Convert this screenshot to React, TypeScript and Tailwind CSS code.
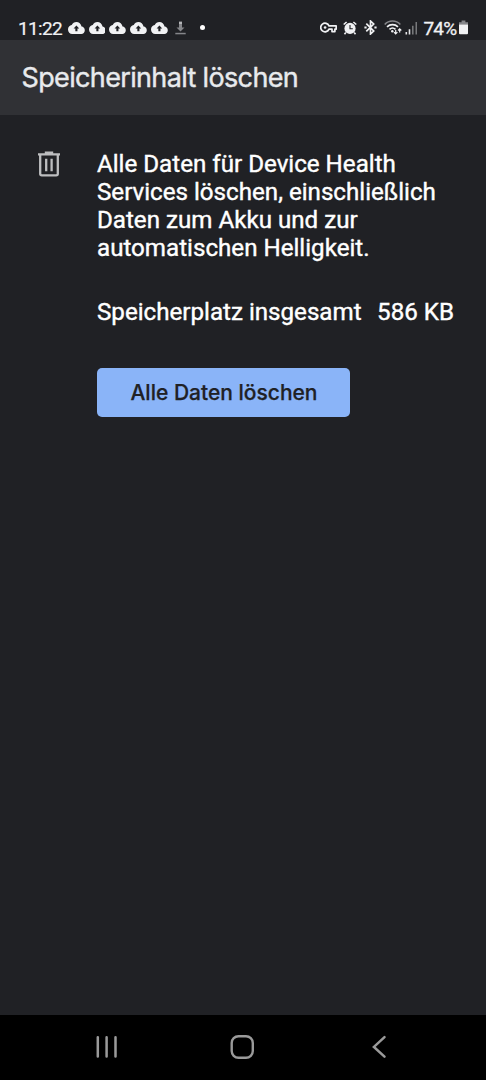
import React from 'react';

const CloudUpload: React.FC = () => (
  <svg className="w-[16.8px] h-[12px]" viewBox="0 4 24 16" preserveAspectRatio="none" fill="currentColor">
    <path fillRule="evenodd" d="M19.35 10.04C18.67 6.59 15.64 4 12 4 9.11 4 6.6 5.64 5.35 8.04 2.34 8.36 0 10.91 0 14c0 3.31 2.69 6 6 6h13c2.76 0 5-2.24 5-5 0-2.64-2.05-4.78-4.65-4.96zM13.5 12.8v3.6h-3v-3.6H8L12 8.6l4 4.2h-2.5z" />
  </svg>
);

const StatusBar: React.FC = () => (
  <div className="flex h-10 items-center pt-[15px] pb-0 pl-[18px] text-[#f1f2f4]">
    <span className="w-[50px] pt-px text-[19px] leading-[25px] tracking-[-0.65px] whitespace-nowrap [-webkit-text-stroke:0.2px]">11:22</span>
    <div className="flex gap-[3.9px]">
      {[0, 1, 2, 3, 4].map((i) => <CloudUpload key={i} />)}
    </div>
    <svg className="ml-[7px] h-[14px] w-[11px]" viewBox="0 0 11 14" fill="#85868a">
      <path d="M4 3.5h3v3h2.5l-4 4-4-4H4z" />
      <path d="M4 .6h3v2.9H4z" fill="#b4b5b8" />
      <path d="M.3 11.8h10.4v1.5H.3z" />
    </svg>
    <span className="ml-[14px] h-[5.4px] w-[5.4px] rounded-full bg-white" />

    {/* Right side: system indicators */}
    <svg className="ml-[115px] h-[11px] w-[17px]" viewBox="0 0 17 11" fill="none" stroke="currentColor" strokeWidth="1.7">
      <path d="M9 3.9A4.3 4.3 0 1 0 9 7.1h3v2.5h2.9V7.1h1.3V3.9z" strokeLinejoin="round" />
      <circle cx="5.1" cy="5.5" r="1.3" fill="currentColor" stroke="none" />
    </svg>
    <svg className="ml-[6px] h-[14px] w-[14px]" viewBox="0 0 14 14" fill="none" stroke="currentColor">
      <circle cx="7" cy="7.4" r="5.6" fill="currentColor" stroke="none" />
      <path d="M.7 3.5 3.6 1M13.3 3.5 10.4 1M2.8 11.5l-1.3 1.7M11.2 11.5l1.3 1.7" strokeWidth="1.6" />
      <path d="M7 4v3.7h2.8" stroke="#202124" strokeWidth="1.1" />
    </svg>
    <svg className="ml-[7px] h-[15px] w-[13px]" viewBox="0 0 13 15" fill="none" stroke="currentColor" strokeWidth="1.7">
      <path d="m2.3 3.6 7.4 7.4-3.2 3V1l3.2 3-7.4 7.4" />
      <path d="M.4 7.5h2.2M10.4 7.5h2.2" strokeWidth="1.9" />
    </svg>
    <svg className="ml-[7px] h-[15px] w-[18px]" viewBox="0 0 18 15" fill="none" stroke="currentColor" strokeWidth="1.6">
      <path d="M.7 4.5C5-.1 12-.1 16.3 4.5" stroke="#85868a" />
      <path d="M3 6.9c3.1-3 7.9-3 11 0M5.5 9.3c1.8-1.6 4.2-1.6 6 0" />
      <circle cx="8.3" cy="11.3" r="1.2" fill="currentColor" stroke="none" />
      <path d="M11.7 10v3.8M10 12.2l1.7 1.7 1.7-1.7M15.7 12.5V8.9M14.1 10.5l1.6-1.6 1.6 1.6" strokeWidth="1.2" />
    </svg>
    <svg className="ml-[3px] h-[14px] w-[13px]" viewBox="0 0 13 14" fill="#77787b">
      <path d="M.5 11h1.6v2.5H.5zM3.7 8.3h1.6v5.2H3.7z" fill="#e3e4e6" />
      <path d="M7 4.7h1.6v8.8H7zM10.5 1H12v12.5h-1.5z" />
    </svg>
    <span className="ml-[5.5px] w-[35.5px] pt-px text-[19px] leading-[25px] tracking-[-0.8px] whitespace-nowrap [-webkit-text-stroke:0.3px]">74%</span>
    <svg className="h-[15px] w-[9px]" viewBox="0 0 9 15" fill="currentColor">
      <path d="M2.6.6h3.8v1.6H9v2.5H0V2.2h2.6z" fill="#85868a" />
      <path d="M0 4.5h9v8.7a1 1 0 0 1-1 1H1a1 1 0 0 1-1-1z" />
    </svg>
  </div>
);

const TrashIcon: React.FC = () => (
  <svg className="h-[26px] w-[22px] shrink-0" viewBox="0 0 22 26" fill="none" stroke="#bdbec0" strokeWidth="2.3">
    <path d="M6.8 1.7h8.4M0 3.4h22" />
    <path d="M2.2 3.5v19.3a1.6 1.6 0 0 0 1.6 1.6h14.4a1.6 1.6 0 0 0 1.6-1.6V3.5M8.2 7.8v12.4M13.6 7.8v12.4" />
  </svg>
);

const NavigationBar: React.FC = () => (
  <nav className="flex h-[65px] items-center bg-black pb-0.5 pl-24 text-[#9a9a9a]">
    <button aria-label="Recents">
      <svg className="h-6 w-[22px]" viewBox="0 0 22 24" fill="none" stroke="currentColor" strokeWidth="2.5" strokeLinecap="round">
        <path d="M1.8 2.2v19.4M10.6 2.2v19.4M19.5 2.2v19.4" />
      </svg>
    </button>
    <button aria-label="Home" className="ml-[112px]">
      <svg className="h-6 w-6" viewBox="0 0 24 24" fill="none" stroke="currentColor" strokeWidth="2.4">
        <rect x="1.7" y="1.2" width="21.1" height="21.6" rx="6.8" />
      </svg>
    </button>
    <button aria-label="Back" className="ml-[117.5px]">
      <svg className="h-6 w-[15px]" viewBox="0 0 15 24" fill="none" stroke="currentColor" strokeWidth="2.5" strokeLinecap="round">
        <path d="M12.5 2.1 1.9 11.9l10.6 9.8" />
      </svg>
    </button>
  </nav>
);

export default function App() {
  return (
    <div className="flex h-[1080px] w-[486px] flex-col overflow-hidden bg-[#202125] font-[Roboto,sans-serif]">
      <StatusBar />
      <header className="flex h-[75px] items-center bg-[#303135] pt-0.5 pl-[21.5px]">
        <h1 className="font-[Inter,sans-serif] text-[27px] tracking-[-0.65px] text-[#e8eaed] whitespace-nowrap [-webkit-text-stroke:0.4px]">Speicherinhalt löschen</h1>
      </header>

      <main className="flex flex-1 items-start pt-9 pl-[38px]">
        <TrashIcon />
        <div className="-mt-px ml-[37px] text-[24.15px] leading-7 text-white [-webkit-text-stroke:0.4px]">
          <p className="whitespace-nowrap">
            Alle Daten für Device Health<br />
            Services löschen, einschließlich<br />
            Daten zum Akku und zur<br />
            automatischen Helligkeit.
          </p>
          <div className="mt-9 flex gap-[15.5px] whitespace-nowrap">
            <span>Speicherplatz insgesamt</span>
            <span>586 KB</span>
          </div>
          <button className="mt-[42px] flex h-[49px] w-[253px] items-center justify-center rounded-[5px] bg-[#8ab4f8] pl-px font-[Inter,sans-serif] text-[21px] font-medium text-[#202124] [-webkit-text-stroke:0.25px]">
            Alle Daten löschen
          </button>
        </div>
      </main>
      <NavigationBar />
    </div>
  );
}
